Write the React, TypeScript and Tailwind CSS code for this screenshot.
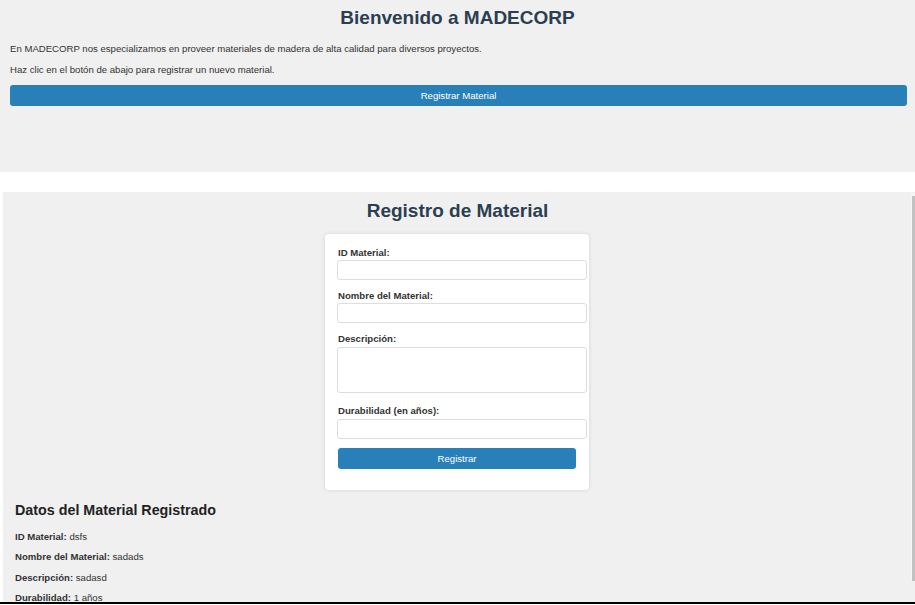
export default function App() {
  const font = { fontFamily: '"Liberation Sans", Arial, sans-serif' };
  return (
    <div className="relative w-[915px] h-[605px] overflow-hidden bg-white text-[#333]" style={font}>
      {/* Top section */}
      <div className="h-[172px] bg-[#f0f0f0] px-[10px] pt-[6px]">
        <h1 className="text-center text-[19px] leading-[24px] font-bold text-[#2c3e50]">Bienvenido a MADECORP</h1>
        <p className="mt-[13px] text-[9.6px] leading-[12px]">
          En MADECORP nos especializamos en proveer materiales de madera de alta calidad para diversos proyectos.
        </p>
        <p className="mt-[9px] text-[9.6px] leading-[12px]">Haz clic en el botón de abajo para registrar un nuevo material.</p>
        <button className="mt-[9px] w-[897px] h-[21px] rounded-[3px] bg-[#2980b9] text-white text-[9.6px] leading-[21px]">
          Registrar Material
        </button>
      </div>

      {/* Second section */}
      <div className="mt-[20px] ml-[3px] h-[410px] bg-[#f0f0f0] relative">
        <h2 className="pt-[7px] text-center text-[19px] leading-[24px] font-bold text-[#2c3e50] pr-[3px]">Registro de Material</h2>
        <div className="mt-[11px] ml-[322px] w-[264px] h-[256px] bg-white rounded-[4px] shadow-[0_0_4px_rgba(0,0,0,0.12)] px-[13px] pt-[13px]">
          <label className="block text-[9.6px] leading-[12px] font-bold text-[#333]">ID Material:</label>
          <div className="mt-[1px] w-[250px] h-[20px] -ml-[1px] border border-[#ddd] rounded-[3px] bg-white" />
          <label className="block mt-[10px] text-[9.6px] leading-[12px] font-bold text-[#333]">Nombre del Material:</label>
          <div className="mt-[1px] w-[250px] h-[20px] -ml-[1px] border border-[#ddd] rounded-[3px] bg-white" />
          <label className="block mt-[10px] text-[9.6px] leading-[12px] font-bold text-[#333]">Descripción:</label>
          <div className="mt-[2px] w-[250px] h-[46px] -ml-[1px] border border-[#ddd] rounded-[3px] bg-white" />
          <label className="block mt-[12px] text-[9.6px] leading-[12px] font-bold text-[#333]">Durabilidad (en años):</label>
          <div className="mt-[2px] w-[250px] h-[20px] -ml-[1px] border border-[#ddd] rounded-[3px] bg-white" />
          <button className="mt-[9px] w-[238px] h-[21px] rounded-[3px] bg-[#2980b9] text-white text-[9.6px] leading-[21px]">
            Registrar
          </button>
        </div>
        <div className="pl-[12px] mt-[11px]">
          <h3 className="text-[14.3px] leading-[18px] font-bold text-[#222]">Datos del Material Registrado</h3>
          <p className="mt-[12px] text-[9.6px] leading-[12px]"><b>ID Material:</b> dsfs</p>
          <p className="mt-[8px] text-[9.6px] leading-[12px]"><b>Nombre del Material:</b> sadads</p>
          <p className="mt-[9px] text-[9.6px] leading-[12px]"><b>Descripción:</b> sadasd</p>
          <p className="mt-[8px] text-[9.6px] leading-[12px]"><b>Durabilidad:</b> 1 años</p>
        </div>
        {/* scrollbar */}
        <div className="absolute right-0 top-[1px] w-[4px] h-[388px] bg-[#f6f6f6]">
          <div className="mt-[3px] w-[3px] ml-[1px] h-[385px] bg-[#c2c2c2]" />
        </div>
      </div>
      <div className="h-[2px] bg-black" />
    </div>
  );
}
